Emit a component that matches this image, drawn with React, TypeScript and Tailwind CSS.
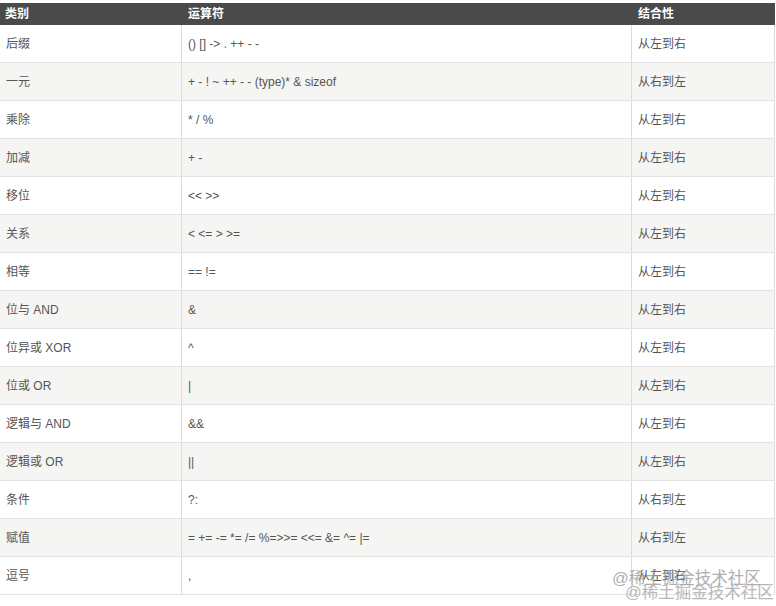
import React from "react";

const rows: [string, string, string][] = [
  ["后缀", "() [] -> . ++ - -", "从左到右"],
  ["一元", "+ - ! ~ ++ - - (type)* & sizeof", "从右到左"],
  ["乘除", "* / %", "从左到右"],
  ["加减", "+ -", "从左到右"],
  ["移位", "<< >>", "从左到右"],
  ["关系", "< <= > >=", "从左到右"],
  ["相等", "== !=", "从左到右"],
  ["位与 AND", "&", "从左到右"],
  ["位异或 XOR", "^", "从左到右"],
  ["位或 OR", "|", "从左到右"],
  ["逻辑与 AND", "&&", "从左到右"],
  ["逻辑或 OR", "||", "从左到右"],
  ["条件", "?:", "从右到左"],
  ["赋值", "= += -= *= /= %=>>= <<= &= ^= |=", "从右到左"],
  ["逗号", ",", "从左到右"],
];

export default function App() {
  return (
    <div
      className="relative w-[776px] h-[606px] bg-white overflow-hidden"
      style={{ fontFamily: '"Liberation Sans", Arial, "Noto Sans CJK SC", sans-serif' }}
    >
      <div className="pt-[3px] w-[775px]">
        <div className="grid grid-cols-[182px_450px_143px] h-[22px] bg-[#4a4a4a] text-white text-[12px] font-bold items-center">
          <div className="pl-[5px]">类别</div>
          <div className="pl-[6px]">运算符</div>
          <div className="pl-[6px]">结合性</div>
        </div>
        {rows.map((r, i) => (
          <div
            key={i}
            className={`grid grid-cols-[182px_450px_143px] h-[38px] border-b border-[#e2e2e2] text-[12px] text-[#555555] ${
              i % 2 === 1 ? "bg-[#f5f5f3]" : "bg-white"
            }`}
          >
            <div className="pl-[6px] flex items-center border-r border-[#dcdcdc]">{r[0]}</div>
            <div className="pl-[6px] flex items-center border-r border-[#dcdcdc]">{r[1]}</div>
            <div className="pl-[6px] flex items-center border-r border-[#dcdcdc]">{r[2]}</div>
          </div>
        ))}
      </div>
      <span className="absolute left-[612px] top-[570px] text-[16.5px] leading-none text-[#9c9c9c] opacity-80 whitespace-nowrap">
        @稀土掘金技术社区
      </span>
      <span className="absolute left-[625px] top-[584px] text-[16.5px] leading-none text-[#a8a8a8] opacity-80 whitespace-nowrap">
        @稀土掘金技术社区
      </span>
    </div>
  );
}
